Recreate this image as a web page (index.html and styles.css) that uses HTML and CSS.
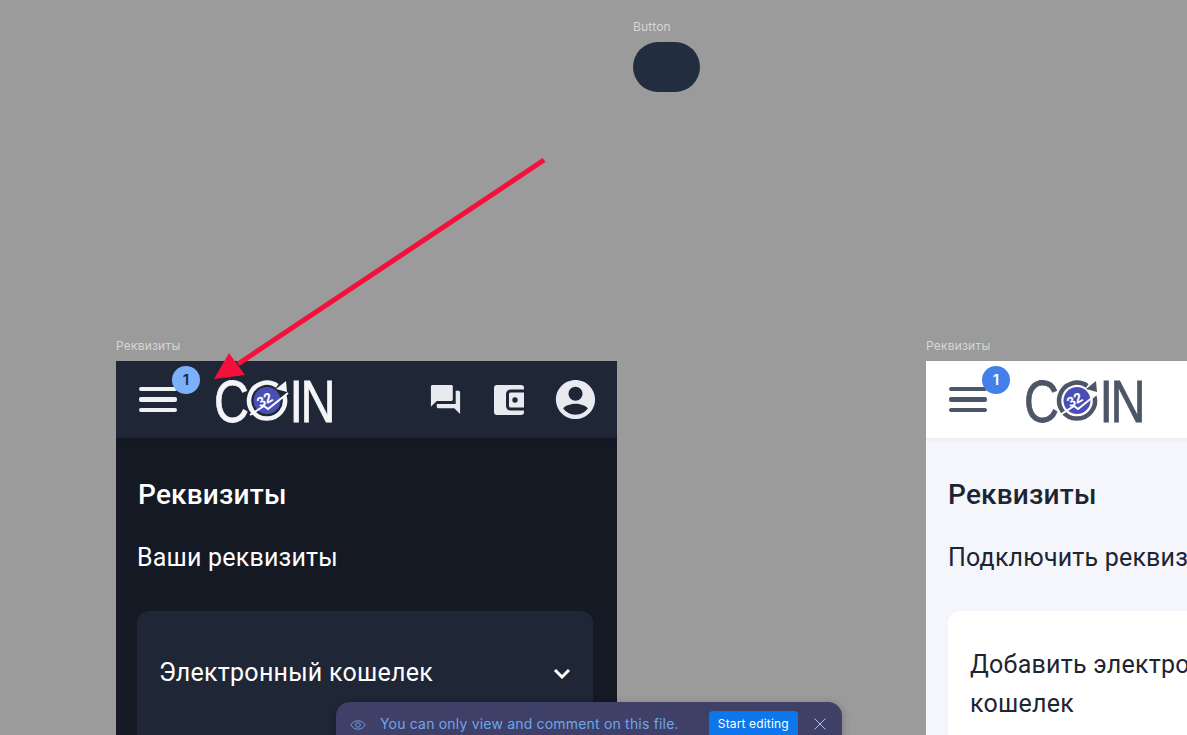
FILE: index.html
```html
<!DOCTYPE html>
<html>
<head>
    <title>Реквизиты</title>
    <link rel="stylesheet" href="styles.css">
</head>
<body>

    <!-- Button component -->
    <div class="frame button-frame">
        <div class="frame-label">Button</div>
        <div class="pill"></div>
    </div>

    <!-- Dark frame -->
    <div class="frame frame-dark">
        <div class="frame-label">Реквизиты</div>
        <div class="screen">
            <header class="topbar">
                <div class="burger">
                    <span></span><span></span><span></span>
                    <div class="badge">1</div>
                </div>
                <svg class="logo" viewBox="0 0 118 48">
                    <text class="logo-text" x="-2" y="46" textLength="35" lengthAdjust="spacingAndGlyphs">C</text>
                    <circle class="logo-disc" cx="51" cy="24.500" r="13.500"/>
                    <path class="logo-ring" d="M68.400 19.800A18 18 0 1 1 61.300 9.800"/>
                    <path class="logo-arrow" d="M60 13l10-8 1 11z"/>
                    <path class="logo-slash" d="M34 39l14-9 4 3 20-16"/>
                    <text class="logo-num" x="49" y="28.500" transform="rotate(-30 49 24.500)">32</text>
                    <text class="logo-text logo-in" x="73.500" y="45.500" textLength="43.700" lengthAdjust="spacingAndGlyphs">IN</text>
                </svg>
                <div class="top-icons">
                    <svg class="icon-chat" viewBox="0 0 24 24"><path d="M21 6h-2v9H6v2c0 .55.45 1 1 1h11l4 4V7c0-.55-.45-1-1-1zm-4 6V3c0-.55-.45-1-1-1H3c-.55 0-1 .45-1 1v14l4-4h10c.55 0 1-.45 1-1z"/></svg>
                    <svg class="icon-wallet" viewBox="0 0 24 24"><path fill-rule="evenodd" d="M4 2h16a2 2 0 0 1 2 2v1h-9a3 3 0 0 0-3 3v8a3 3 0 0 0 3 3h9v1a2 2 0 0 1-2 2H4a2 2 0 0 1-2-2V4a2 2 0 0 1 2-2zm9 5h9v10h-9a1 1 0 0 1-1-1V8a1 1 0 0 1 1-1zm3 3.200a1.800 1.800 0 1 0 0 3.600 1.800 1.800 0 0 0 0-3.600z"/></svg>
                    <svg class="icon-user" viewBox="0 0 24 24"><path d="M12 2C6.480 2 2 6.480 2 12s4.480 10 10 10 10-4.480 10-10S17.520 2 12 2zm0 3.500a3.600 3.600 0 1 1 0 7.200 3.600 3.600 0 0 1 0-7.200zM12 19.800c-2.600 0-4.900-1.300-6.300-3.300C6.900 15 9.800 14.200 12 14.200s5.100.8 6.300 2.300c-1.400 2-3.700 3.300-6.300 3.300z"/></svg>
                </div>
            </header>
            <div class="content">
                <h1>Реквизиты</h1>
                <h2>Ваши реквизиты</h2>
                <div class="card">
                    <div class="card-title">Электронный кошелек</div>
                    <svg class="chevron" viewBox="0 0 18 11"><path d="M2 2l7 7 7-7"/></svg>
                </div>
            </div>
        </div>
    </div>

    <!-- Light frame -->
    <div class="frame frame-light">
        <div class="frame-label">Реквизиты</div>
        <div class="screen">
            <header class="topbar">
                <div class="burger">
                    <span></span><span></span><span></span>
                    <div class="badge">1</div>
                </div>
                <svg class="logo" viewBox="0 0 118 48">
                    <text class="logo-text" x="-2" y="46" textLength="35" lengthAdjust="spacingAndGlyphs">C</text>
                    <circle class="logo-disc" cx="51" cy="24.500" r="13.500"/>
                    <path class="logo-ring" d="M68.400 19.800A18 18 0 1 1 61.300 9.800"/>
                    <path class="logo-arrow" d="M60 13l10-8 1 11z"/>
                    <path class="logo-slash" d="M34 39l14-9 4 3 20-16"/>
                    <text class="logo-num" x="49" y="28.500" transform="rotate(-30 49 24.500)">32</text>
                    <text class="logo-text logo-in" x="73.500" y="45.500" textLength="43.700" lengthAdjust="spacingAndGlyphs">IN</text>
                </svg>
            </header>
            <div class="content">
                <h1>Реквизиты</h1>
                <h2>Подключить реквизиты</h2>
                <div class="card">
                    <div class="card-title">Добавить электронный кошелек</div>
                </div>
            </div>
        </div>
    </div>

    <!-- View only toast -->
    <div class="toast">
        <svg class="icon-eye" viewBox="0 0 16 16"><path d="M.8 8C2.500 5.200 5 3.800 8 3.800s5.500 1.400 7.200 4.200c-1.700 2.800-4.200 4.200-7.200 4.200S2.500 10.800.8 8z"/><circle cx="8" cy="8" r="2.300"/></svg>
        <span class="toast-text">You can only view and comment on this file.</span>
        <button class="toast-btn">Start editing</button>
        <svg class="icon-close" viewBox="0 0 12 12"><path d="M.5.500l11 11M11.500.500l-11 11"/></svg>
    </div>

    <!-- Annotation arrow -->
    <svg class="arrow" viewBox="0 0 1187 735">
        <path class="arrow-line" d="M544 160L238 364"/>
        <path class="arrow-head" d="M214 379L229 353 245 375z"/>
    </svg>

</body>
</html>
```

FILE: styles.css
```css
html, body {
    height: 100%;
}

body {
    margin: 0;
    position: relative;
    overflow: hidden;
    background: #9b9b9b;
    font-family: Roboto, 'Liberation Sans', sans-serif;
}

/* frames sit on a free canvas */
.frame {
    position: absolute;
}

.frame-label {
    font-family: Inter, sans-serif;
    font-size: 12px;
    letter-spacing: 0.2px;
    line-height: 15px;
    color: #d6d6d6;
    margin-bottom: 8px;
}

.button-frame {
    left: 633px;
    top: 19px;
}

.pill {
    width: 67px;
    height: 50px;
    border-radius: 25px;
    background: #222d40;
}

.frame-dark {
    left: 116px;
    top: 338px;
    width: 501px;
}

.frame-light {
    left: 926px;
    top: 338px;
    width: 501px;
}

.screen {
    height: 397px;
    overflow: hidden;
}

.frame-dark .screen {
    background: #151924;
    color: #fff;
}

.frame-light .screen {
    background: #f4f6fb;
    color: #1d2432;
}

.topbar {
    height: 77px;
    display: flex;
    align-items: center;
    padding: 0 22px 0 23px;
    box-shadow: 0 2px 4px rgba(0, 0, 0, 0.05);
}

.frame-dark .topbar {
    background: #1f2636;
}

.frame-light .topbar {
    background: #fff;
}

.burger {
    position: relative;
    width: 38px;
    margin-right: 39px;
    display: flex;
    flex-direction: column;
    gap: 6px;
}

.burger span {
    height: 4.5px;
    border-radius: 2px;
}

.frame-dark .burger span {
    background: #eef0f4;
}

.frame-light .burger span {
    background: #4d5666;
}

.badge {
    position: absolute;
    left: 33px;
    top: -21px;
    width: 28px;
    height: 28px;
    border-radius: 50%;
    font-family: Inter, sans-serif;
    font-size: 15px;
    font-weight: 600;
    line-height: 28px;
    text-align: center;
}

.frame-dark .badge {
    background: #7cb0fb;
    color: #1f2636;
}

.frame-light .badge {
    background: #4480ea;
    color: #fff;
}

.logo {
    width: 118px;
    height: 48px;
    overflow: visible;
}

.logo-text {
    font-family: 'Liberation Sans', sans-serif;
    font-size: 60px;
    stroke-width: 0.8;
}

.logo-in {
    letter-spacing: -3px;
}

.frame-dark .logo-text {
    fill: #f4f5f8;
    stroke: #f4f5f8;
}

.frame-light .logo-text {
    fill: #4d5666;
    stroke: #4d5666;
}

.logo-disc {
    fill: #4a4fb5;
}

.logo-ring {
    fill: none;
    stroke-width: 4.5;
}

.frame-dark .logo-ring {
    stroke: #f4f5f8;
}

.frame-light .logo-ring {
    stroke: #4d5666;
}

.frame-dark .logo-arrow {
    fill: #f4f5f8;
}

.frame-light .logo-arrow {
    fill: #4d5666;
}

.logo-slash {
    fill: none;
    stroke: #fff;
    stroke-width: 2;
}

.logo-num {
    font-family: 'Liberation Sans', sans-serif;
    font-size: 14px;
    font-weight: bold;
    text-anchor: middle;
    fill: #fff;
}

.top-icons {
    margin-left: auto;
    display: flex;
    align-items: center;
    gap: 28px;
}

.top-icons svg {
    fill: #e8eaf0;
}

.icon-chat {
    width: 35px;
    height: 35px;
}

.icon-wallet {
    width: 36px;
    height: 36px;
}

.icon-user {
    width: 47px;
    height: 47px;
    margin-left: -3px;
    margin-right: -4px;
}

.content {
    padding: 39px 24px 0 22px;
}

.frame-dark .content {
    padding-left: 21px;
}

h1 {
    margin: 0 0 27px 1px;
    font-size: 28px;
    letter-spacing: 0.2px;
    line-height: 36px;
    font-weight: 500;
}

.frame-light h1 {
    margin-left: 0;
}

h2 {
    margin: 0 0 35px;
    font-size: 25px;
    letter-spacing: 0.2px;
    line-height: 36px;
    font-weight: 400;
}

.card {
    display: flex;
    justify-content: space-between;
    align-items: flex-start;
    padding: 34px 22px 40px 22px;
    border-radius: 12px;
    min-height: 300px;
}

.frame-dark .card {
    padding-top: 42px;
    background: #1f2636;
}

.frame-light .card {
    background: #fff;
}

.card-title {
    font-size: 25px;
    letter-spacing: 0.25px;
    line-height: 39px;
    width: 300px;
}

.chevron {
    width: 18px;
    height: 11px;
    margin-top: 15px;
    fill: none;
    stroke: #fff;
    stroke-width: 3;
}

/* toast floats over the canvas */
.toast {
    position: absolute;
    left: 336px;
    top: 702px;
    width: 506px;
    height: 60px;
    box-sizing: border-box;
    padding: 9px 14px 0;
    display: flex;
    align-items: flex-start;
    background: #3e4068;
    border-radius: 14px;
    box-shadow: 0 2px 8px rgba(0, 0, 0, 0.25);
    font-family: Inter, sans-serif;
}

.icon-eye {
    width: 16px;
    height: 16px;
    margin-top: 6px;
    fill: none;
    stroke: #6d9bd8;
    stroke-width: 1;
}

.toast-text {
    margin-left: 14px;
    font-size: 14px;
    letter-spacing: 0.19px;
    line-height: 26px;
    color: #6fa6e8;
}

.toast-btn {
    margin-left: 30px;
    width: 89px;
    height: 30px;
    padding: 0 0 6px;
    border: none;
    border-radius: 4px;
    background: #0d76ea;
    color: #fff;
    font-family: Inter, sans-serif;
    font-size: 12px;
    letter-spacing: 0.15px;
}

.icon-close {
    width: 12px;
    height: 12px;
    margin: 7px 0 0 16px;
    fill: none;
    stroke: #a9c4ec;
    stroke-width: 1;
}

.arrow {
    position: absolute;
    left: 0;
    top: 0;
    width: 1187px;
    height: 735px;
}

.arrow-line {
    fill: none;
    stroke: #f5103c;
    stroke-width: 5;
}

.arrow-head {
    fill: #f5103c;
}
```
